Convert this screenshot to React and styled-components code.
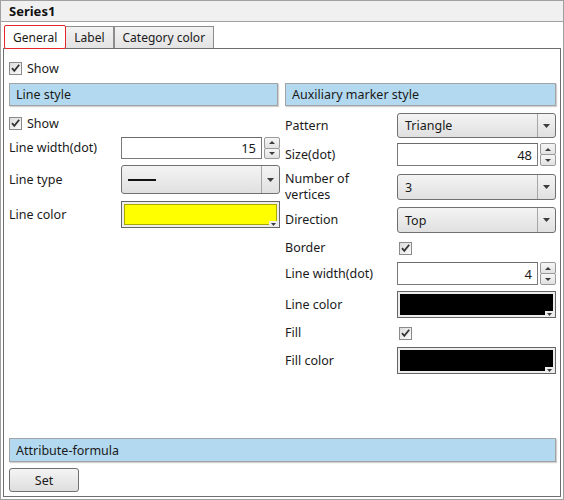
import React from 'react';
import styled, { createGlobalStyle } from 'styled-components';

const Global = createGlobalStyle`
  html, body { margin: 0; padding: 0; background: #fff; }
  body {
    font-family: "Noto Sans", "Liberation Sans", sans-serif;
    font-size: 12px;
    color: #1e1e1e;
  }
  * { box-sizing: border-box; }
`;

const Window = styled.div`
  width: 564px;
  height: 500px;
  border: 1px solid #a0a0a0;
  background: #fff;
  display: flex;
  flex-direction: column;
`;

const TitleBar = styled.div`
  height: 21px;
  background: #f0f0f0;
  border-bottom: 1px solid #a0a0a0;
  padding-left: 8px;
  font-weight: bold;
  font-size: 13px;
  display: flex;
  align-items: center;
  color: #111;
`;

const Body = styled.div`
  flex: 1;
  display: flex;
  flex-direction: column;
  padding: 3px 2px 2px 2px;
  min-height: 0;
`;

const TabRow = styled.div`
  height: 23px;
  display: flex;
  align-items: flex-end;
  padding-left: 1px;
`;

const Tab = styled.div`
  position: relative;
  height: ${p => (p.$active ? 24 : 22)}px;
  margin-bottom: ${p => (p.$active ? -1 : 0)}px;
  z-index: ${p => (p.$active ? 2 : 0)};
  padding: 0 ${p => p.$pad}px;
  display: flex;
  align-items: center;
  font-size: 12px;
  color: #1a1a1a;
  background: ${p => (p.$active ? '#fff' : 'linear-gradient(#f2f2f2, #e3e3e3)')};
  border: 1px solid ${p => (p.$active ? '#e8262a' : '#8c8c8c')};
  border-bottom: ${p => (p.$active ? '1px solid #e8262a' : 'none')};
  border-left: ${p => (p.$active ? '1px solid #e8262a' : p.$first ? '1px solid #8c8c8c' : 'none')};
  border-radius: ${p => (p.$active ? '2px' : '0')};
`;

const Panel = styled.div`
  flex: 1;
  border: 1px solid #6e6e6e;
  padding: 0 4px 4px 5px;
  display: flex;
  flex-direction: column;
  min-height: 0;
`;

const Columns = styled.div`
  display: flex;
  gap: 5px;
  margin-top: 8px;
`;

const Column = styled.div`
  width: 271px;
  display: flex;
  flex-direction: column;
`;

const SectionHeader = styled.div`
  height: ${p => p.$h || 23}px;
  margin-right: ${p => p.$mr || 0}px;
  background: #b3d9f0;
  border: 1px solid #a3a3a3;
  box-shadow: 1px 1px 1px rgba(0, 0, 0, 0.18);
  display: flex;
  align-items: center;
  padding-left: 6px;
  font-size: 12.5px;
  color: #1a1a1a;
`;

const Row = styled.div`
  display: flex;
  align-items: center;
  height: ${p => p.$h}px;
  margin-top: ${p => p.$mt}px;
`;

const Label = styled.div`
  width: 112px;
  flex: none;
  line-height: 16px;
  font-size: 12.5px;
  color: #1a1a1a;
`;

const CheckLabel = styled.div`
  margin-left: 5px;
  font-size: 12.5px;
  color: #1a1a1a;
`;

const CheckBoxBox = styled.div`
  width: 13px;
  height: 13px;
  flex: none;
  margin-left: ${p => p.$ml || 0}px;
  border: 1px solid #8a8a8a;
  background: linear-gradient(135deg, #dcdcdc, #fbfbfb);
  display: flex;
  align-items: center;
  justify-content: center;
`;

const CheckBox = ({ ml }) => (
  <CheckBoxBox $ml={ml}>
    <svg width="11" height="11" viewBox="0 0 11 11">
      <path d="M2 5.2 L4.3 7.8 L9.2 1.8" fill="none" stroke="#333" strokeWidth="1.8" />
    </svg>
  </CheckBoxBox>
);

const SelectBox = styled.div`
  width: 159px;
  height: 100%;
  border: 1px solid #707070;
  border-radius: 3px;
  background: linear-gradient(#f4f4f4, #e0e0e0);
  display: flex;
  align-items: stretch;
`;

const SelectValue = styled.div`
  flex: 1;
  display: flex;
  align-items: center;
  padding-left: 7px;
  font-size: 12.5px;
  color: #1a1a1a;
`;

const SelectArrow = styled.div`
  width: 18px;
  border-left: 1px solid #a6a6a6;
  display: flex;
  align-items: center;
  justify-content: center;
`;

const LineSample = styled.div`
  width: 28px;
  height: 2px;
  background: #111;
  margin-left: -1px;
`;

const Caret = ({ w = 7, h = 4 }) => (
  <svg width={w} height={h} viewBox={`0 0 ${w} ${h}`}>
    <path d={`M0 0 L${w} 0 L${w / 2} ${h} Z`} fill="#3c3c3c" />
  </svg>
);

const Select = ({ children }) => (
  <SelectBox>
    <SelectValue>{children}</SelectValue>
    <SelectArrow>
      <Caret />
    </SelectArrow>
  </SelectBox>
);

const SpinWrap = styled.div`
  width: 159px;
  height: 100%;
  display: flex;
  gap: 2px;
`;

const SpinInput = styled.div`
  flex: 1;
  border: 1px solid #7a7a7a;
  border-top-color: #6a6a6a;
  background: #fff;
  display: flex;
  align-items: center;
  justify-content: flex-end;
  padding-right: 5px;
  font-size: 13px;
  color: #1a1a1a;
`;

const SpinButtons = styled.div`
  width: 16px;
  display: flex;
  flex-direction: column;
`;

const SpinButton = styled.div`
  flex: 1;
  border: 1px solid #9a9a9a;
  border-radius: 2px;
  background: linear-gradient(#f6f6f6, #e2e2e2);
  display: flex;
  align-items: center;
  justify-content: center;
  & + & { margin-top: -1px; }
`;

const Spinner = ({ value }) => (
  <SpinWrap>
    <SpinInput>{value}</SpinInput>
    <SpinButtons>
      <SpinButton>
        <svg width="6" height="3" viewBox="0 0 6 3"><path d="M0 3 L6 3 L3 0 Z" fill="#3c3c3c" /></svg>
      </SpinButton>
      <SpinButton>
        <Caret w={6} h={3} />
      </SpinButton>
    </SpinButtons>
  </SpinWrap>
);

const ColorOuter = styled.div`
  position: relative;
  width: 159px;
  height: 100%;
  border: 1px solid #656565;
  padding: 2px;
  background: #ededed;
  display: flex;
`;

const Swatch = styled.div`
  flex: 1;
  background: ${p => p.$color};
  border: 1px solid ${p => p.$edge};
`;

const ColorCorner = styled.div`
  position: absolute;
  right: 1px;
  bottom: 1px;
  width: 9px;
  height: 5px;
  background: #ededed;
  display: flex;
  align-items: flex-end;
  justify-content: center;
`;

const ColorPicker = ({ color, edge }) => (
  <ColorOuter>
    <Swatch $color={color} $edge={edge} />
    <ColorCorner>
      <Caret w={5} h={3} />
    </ColorCorner>
  </ColorOuter>
);

const Bottom = styled.div`
  margin-top: auto;
  display: flex;
  flex-direction: column;
`;

const Button = styled.div`
  width: 70px;
  height: 24px;
  margin-top: 6px;
  border: 1px solid #707070;
  border-radius: 3px;
  background: linear-gradient(#f4f4f4, #dedede);
  display: flex;
  align-items: center;
  justify-content: center;
  font-size: 12.5px;
  color: #1a1a1a;
`;

export default function App() {
  return (
    <>
      <Global />
      <Window>
        <TitleBar>Series1</TitleBar>
        <Body>
          <TabRow>
            <Tab $active $pad={8}>General</Tab>
            <Tab $pad={8}>Label</Tab>
            <Tab $pad={8} $first>Category color</Tab>
          </TabRow>
          <Panel>
            <Row $h={13} $mt={13}>
              <CheckBox />
              <CheckLabel>Show</CheckLabel>
            </Row>
            <Columns>
              <Column>
                <SectionHeader $mr={2}>Line style</SectionHeader>
                <Row $h={13} $mt={11}>
                  <CheckBox />
                  <CheckLabel>Show</CheckLabel>
                </Row>
                <Row $h={22} $mt={7}>
                  <Label>Line width(dot)</Label>
                  <Spinner value="15" />
                </Row>
                <Row $h={29} $mt={6}>
                  <Label>Line type</Label>
                  <Select><LineSample /></Select>
                </Row>
                <Row $h={27} $mt={7}>
                  <Label>Line color</Label>
                  <ColorPicker color="#ffff00" edge="#a8a800" />
                </Row>
              </Column>
              <Column>
                <SectionHeader>Auxiliary marker style</SectionHeader>
                <Row $h={25} $mt={7}>
                  <Label>Pattern</Label>
                  <Select>Triangle</Select>
                </Row>
                <Row $h={23} $mt={5}>
                  <Label>Size(dot)</Label>
                  <Spinner value="48" />
                </Row>
                <Row $h={26} $mt={8}>
                  <Label>Number of<br />vertices</Label>
                  <Select>3</Select>
                </Row>
                <Row $h={26} $mt={7}>
                  <Label>Direction</Label>
                  <Select>Top</Select>
                </Row>
                <Row $h={14} $mt={8}>
                  <Label>Border</Label>
                  <CheckBox ml={2} />
                </Row>
                <Row $h={23} $mt={7}>
                  <Label>Line width(dot)</Label>
                  <Spinner value="4" />
                </Row>
                <Row $h={27} $mt={6}>
                  <Label>Line color</Label>
                  <ColorPicker color="#000" edge="#000" />
                </Row>
                <Row $h={14} $mt={8}>
                  <Label>Fill</Label>
                  <CheckBox ml={2} />
                </Row>
                <Row $h={27} $mt={7}>
                  <Label>Fill color</Label>
                  <ColorPicker color="#000" edge="#000" />
                </Row>
              </Column>
            </Columns>
            <Bottom>
              <SectionHeader $h={24}>Attribute-formula</SectionHeader>
              <Button>Set</Button>
            </Bottom>
          </Panel>
        </Body>
      </Window>
    </>
  );
}
